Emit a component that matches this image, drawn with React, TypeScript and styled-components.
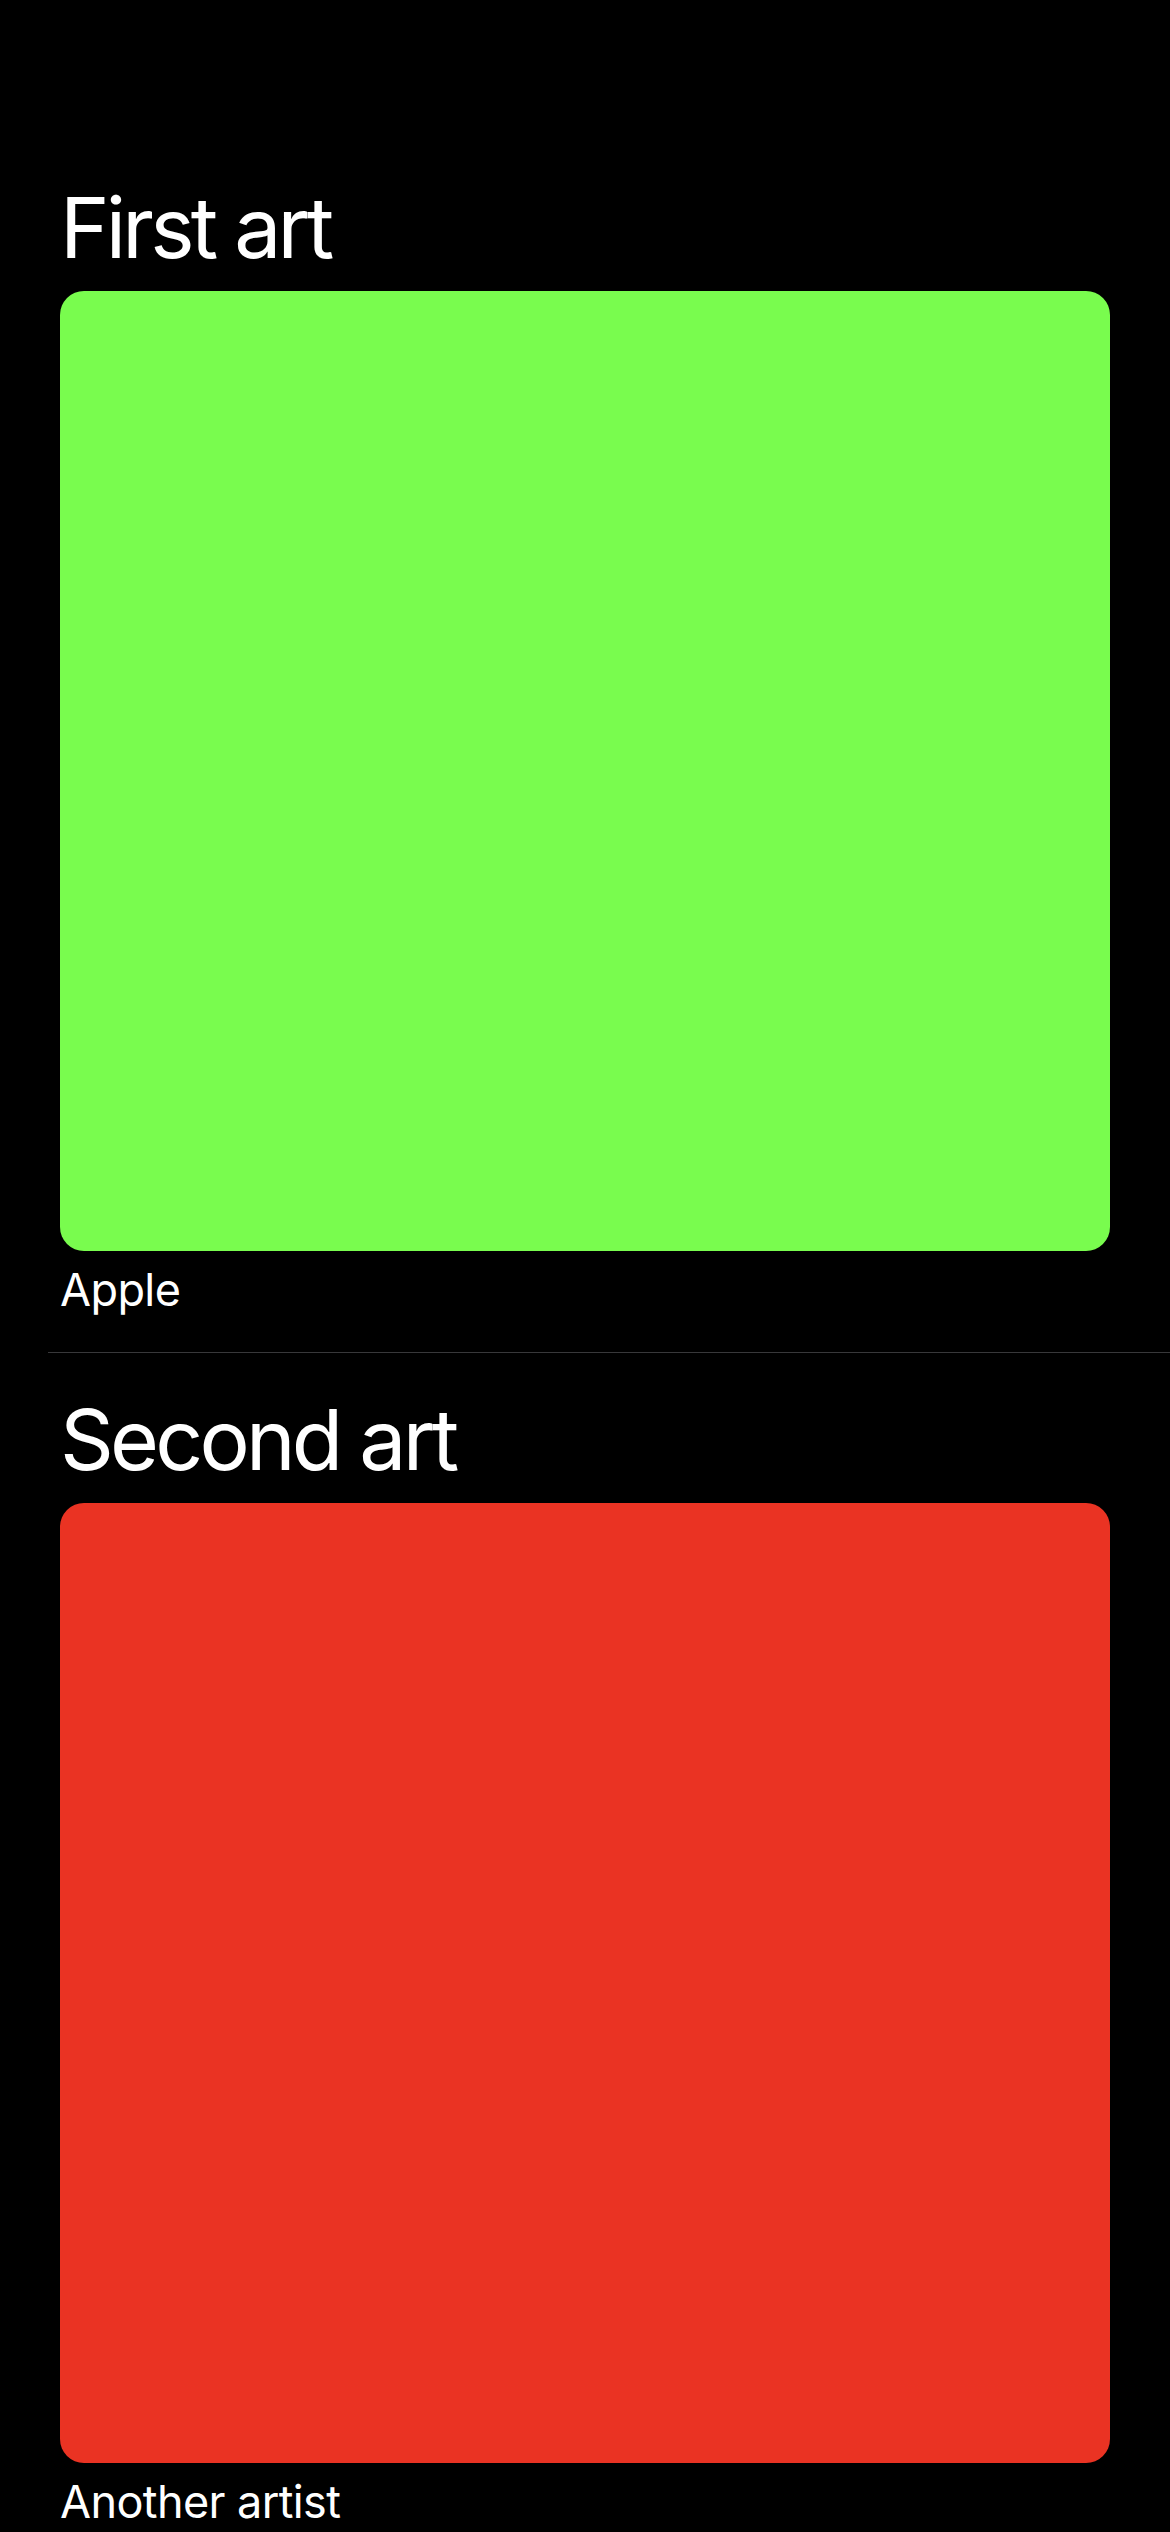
import React from 'react'
import styled, { createGlobalStyle } from 'styled-components'

const GlobalStyle = createGlobalStyle`
  html, body {
    margin: 0;
    padding: 0;
    background: #000;
  }
  body {
    font-family: Inter, "Noto Sans", "Liberation Sans", sans-serif;
    color: #fff;
    -webkit-font-smoothing: antialiased;
  }
`

const Page = styled.div`
  min-height: 2532px;
  background: #000;
  padding-top: 178px;
  box-sizing: border-box;
  overflow: hidden;
`

const Row = styled.section`
  padding: 0 60px;
  display: flex;
  flex-direction: column;
`

const Title = styled.h2`
  margin: 0;
  font-size: 84px;
  line-height: 100px;
  font-weight: 400;
  letter-spacing: -3.8px;
`

const Art = styled.div<{ $color: string }>`
  margin-top: 13px;
  height: 960px;
  border-radius: 24px;
  background: ${({ $color }) => $color};
`

const Artist = styled.div`
  margin-top: 12px;
  font-size: 45px;
  line-height: 54px;
  font-weight: 400;
  letter-spacing: -0.6px;
`

const Separator = styled.div`
  height: 1px;
  margin: 35px 0 37px 48px;
  background: #38383a;
`

const arts = [
  { title: 'First art', artist: 'Apple', color: '#79fc4e' },
  { title: 'Second art', artist: 'Another artist', color: '#ea3323' },
]

export default function App() {
  return (
    <Page>
      <GlobalStyle />
      {arts.map((art, i) => (
        <React.Fragment key={art.title}>
          {i > 0 && <Separator />}
          <Row>
            <Title>{art.title}</Title>
            <Art $color={art.color} />
            <Artist>{art.artist}</Artist>
          </Row>
        </React.Fragment>
      ))}
    </Page>
  )
}
